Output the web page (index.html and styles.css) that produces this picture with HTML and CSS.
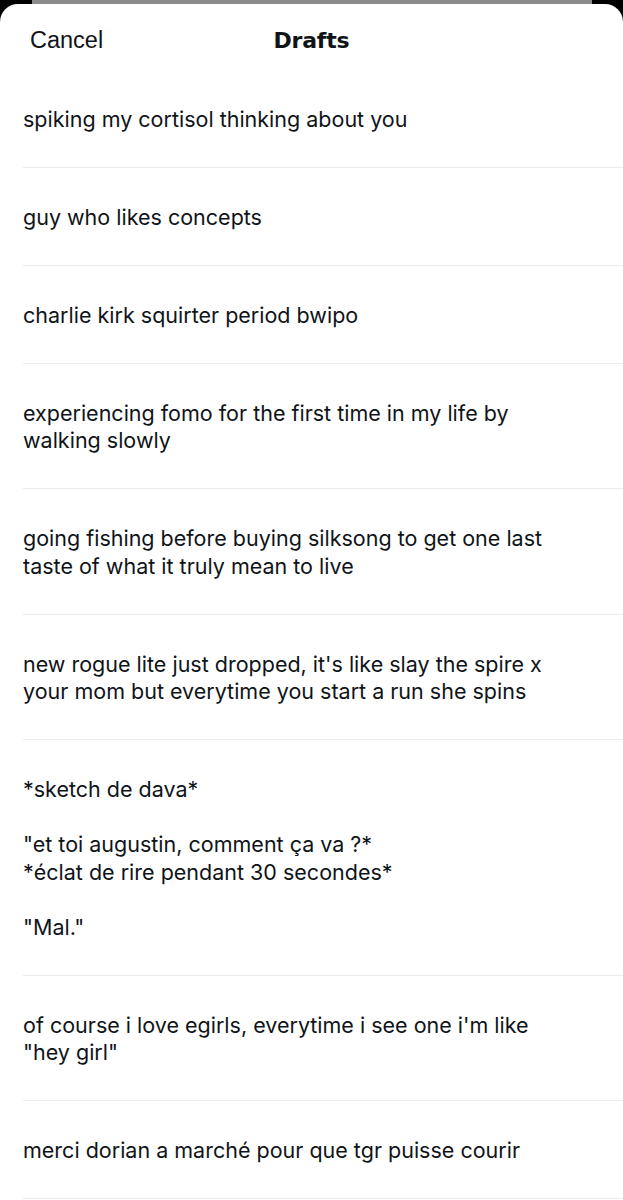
FILE: index.html
```html
<!DOCTYPE html>
<html lang="en">
<head>
<meta charset="utf-8">
<title>Drafts</title>
<link rel="stylesheet" href="styles.css">
</head>
<body>
<div class="backdrop-bar"></div>
<main class="sheet">
  <header class="sheet-header">
    <span class="cancel">Cancel</span>
    <h1 class="title">Drafts</h1>
    <span class="spacer"></span>
  </header>
  <ul class="drafts">
    <li class="draft">spiking my cortisol thinking about you</li>
    <li class="draft">guy who likes concepts</li>
    <li class="draft">charlie kirk squirter period bwipo</li>
    <li class="draft">experiencing fomo for the first time in my life by<br>walking slowly</li>
    <li class="draft">going fishing before buying silksong to get one last<br>taste of what it truly mean to live</li>
    <li class="draft">new rogue lite just dropped, it's like slay the spire x<br>your mom but everytime you start a run she spins</li>
    <li class="draft">*sketch de dava*<br><br>"et toi augustin, comment ça va ?*<br>*éclat de rire pendant 30 secondes*<br><br>"Mal."</li>
    <li class="draft">of course i love egirls, everytime i see one i'm like<br>"hey girl"</li>
    <li class="draft">merci dorian a marché pour que tgr puisse courir</li>
  </ul>
</main>
</body>
</html>
```
FILE: styles.css
```css
html, body {
  margin: 0;
  padding: 0;
  background: #000;
}

body {
  width: 623px;
  height: 1200px;
  overflow: hidden;
}

.backdrop-bar {
  height: 4px;
  margin: 0 31px 0 32px;
  background: #8b8b8b;
}

.sheet {
  background: #fff;
  border-radius: 18px 18px 0 0;
  min-height: 1196px;
}

.sheet-header {
  display: grid;
  grid-template-columns: 1fr auto 1fr;
  align-items: center;
  height: 65.5px;
  padding: 7px 30px 0;
  box-sizing: border-box;
  color: #0f1419;
}

.cancel {
  font-family: "Liberation Sans", Arial, sans-serif;
  font-size: 23.5px;
  letter-spacing: 0;
  justify-self: start;
}

.title {
  margin: 0;
  font-family: "DejaVu Sans", sans-serif;
  font-weight: bold;
  font-size: 22px;
  letter-spacing: -0.2px;
}

.drafts {
  list-style: none;
  margin: 0;
  padding: 0;
}

.draft {
  margin-left: 23px;
  padding: 36.25px 23px 33.25px 0;
  border-bottom: 1px solid #e9ecee;
  font-family: "Inter", sans-serif;
  font-size: 21.5px;
  line-height: 27.5px;
  color: #0f1419;
  white-space: nowrap;
}
```
